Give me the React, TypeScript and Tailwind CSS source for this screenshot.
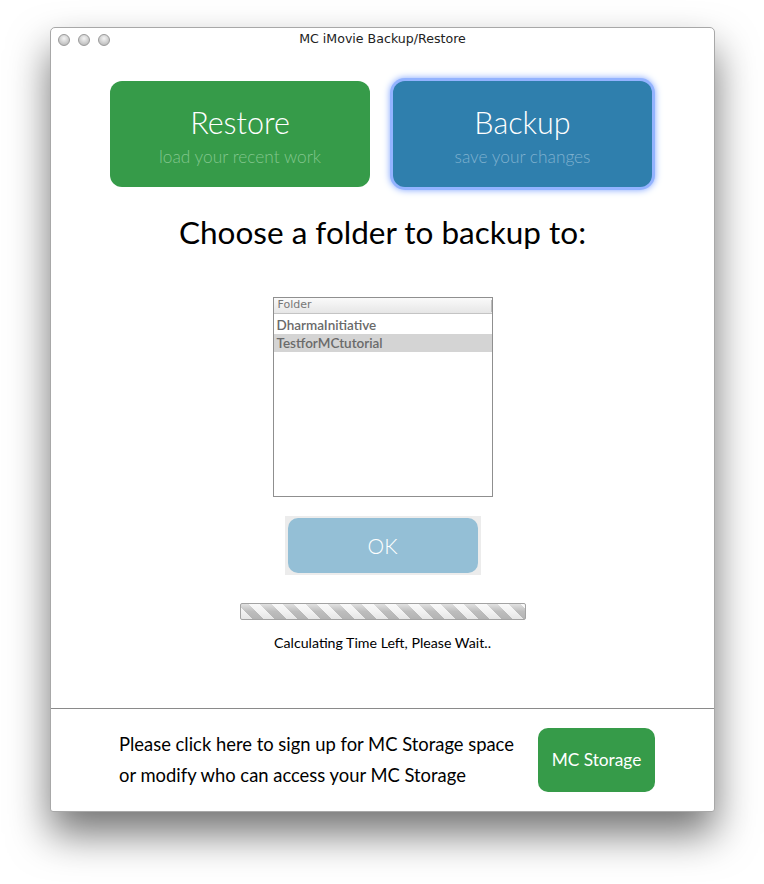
// MC iMovie Backup/Restore window
const folders = ['DharmaInitiative', 'TestforMCtutorial'];

function TrafficLights() {
  return (
    <div className="absolute left-[7px] top-[6px] flex gap-[8px]">
      {[0, 1, 2].map((i) => (
        <span
          key={i}
          className="h-[12px] w-[12px] rounded-full border border-[#9a9a9a] bg-[radial-gradient(circle_at_50%_35%,#f4f4f4,#c4c4c4_70%,#b0b0b0)]"
        />
      ))}
    </div>
  );
}

export default function App() {
  return (
    <div className="h-[884px] w-[764px] bg-white pl-[50px] pt-[27px] font-['Lato',sans-serif]">
      <div className="flex h-[785px] w-[665px] flex-col rounded-t-[5px] rounded-b-[3px] border border-[#a8a8a8] bg-white shadow-[0_22px_40px_rgba(0,0,0,0.55)]">
        {/* title bar */}
        <div className="relative flex h-[22px] shrink-0 items-center justify-center">
          <TrafficLights />
          <span className="font-['DejaVu_Sans',sans-serif] text-[12.6px] text-[#222]">MC iMovie Backup/Restore</span>
        </div>

        {/* main area */}
        <div className="flex flex-1 flex-col items-center">
          <div className="-ml-[3px] mt-[31px] flex gap-[23px]">
            <button className="flex h-[106px] w-[260px] flex-col items-center justify-center rounded-[12px] bg-[#369b49] pt-[3px]">
              <span className="text-[30.5px] font-light leading-[34px] text-white">Restore</span>
              <span className="mt-[8px] text-[17.3px] font-light leading-[20px] text-[#82c68d]">load your recent work</span>
            </button>
            <button className="flex h-[106px] w-[259px] flex-col items-center justify-center rounded-[12px] bg-[#2f7fad] pt-[3px] ring-[3px] ring-[#93b3ff] shadow-[0_0_7px_3px_#7ea4ff]">
              <span className="text-[30.5px] font-light leading-[34px] text-white">Backup</span>
              <span className="mt-[8px] text-[17.3px] font-light leading-[20px] text-[#7fb1cf]">save your changes</span>
            </button>
          </div>

          <h1 className="mt-[27px] text-[31.5px] leading-[36px] text-black">Choose a folder to backup to:</h1>

          <div className="mt-[47px] h-[200px] w-[220px] border border-[#8f8f8f] bg-white">
            <div className="flex h-[16px] items-center border-b border-[#c4c4c4] bg-[linear-gradient(#fafafa,#e6e6e6)] pl-[4px] text-[11px] text-[#777] font-['DejaVu_Sans',sans-serif]">
              <span className="flex-1">Folder</span>
              <span className="h-[12px] w-px bg-[#bbb]" />
            </div>
            <div className="mt-[2px]">
              {folders.map((f, i) => (
                <div
                  key={f}
                  className={
                    'h-[18px] pl-[3px] text-[13.5px] font-semibold leading-[18px] text-[#6a6a6a] ' +
                    (i === 1 ? 'bg-[#d4d4d4]' : '')
                  }
                >
                  {f}
                </div>
              ))}
            </div>
          </div>

          <div className="mt-[19px] bg-[#ececec] px-[3px] py-[2px]">
            <button className="flex h-[55px] w-[190px] items-center justify-center rounded-[10px] bg-[#94bfd6] text-[21px] font-light text-white">
              OK
            </button>
          </div>

          <div className="mt-[28px] h-[17px] w-[286px] rounded-[2px] border border-[#a3a3a3] bg-[linear-gradient(rgba(255,255,255,0.55),rgba(255,255,255,0)_50%,rgba(0,0,0,0.05)),repeating-linear-gradient(45deg,#f2f2f2_0px,#f2f2f2_8px,#bdbdbd_8px,#bdbdbd_16px)]" />

          <p className="mt-[15px] text-[14.2px] leading-[16px] text-black">Calculating Time Left, Please Wait..</p>
        </div>

        {/* footer */}
        <div className="flex h-[103px] shrink-0 items-center border-t border-[#8a8a8a] pl-[68px] pr-[59px]">
          <p className="flex-1 text-[18.4px] leading-[31px] text-black">
            Please click here to sign up for MC Storage space
            <br />
            or modify who can access your MC Storage
          </p>
          <button className="flex h-[64px] w-[117px] items-center justify-center rounded-[10px] bg-[#369b49] text-[17.3px] text-white">
            MC Storage
          </button>
        </div>
      </div>
    </div>
  );
}
